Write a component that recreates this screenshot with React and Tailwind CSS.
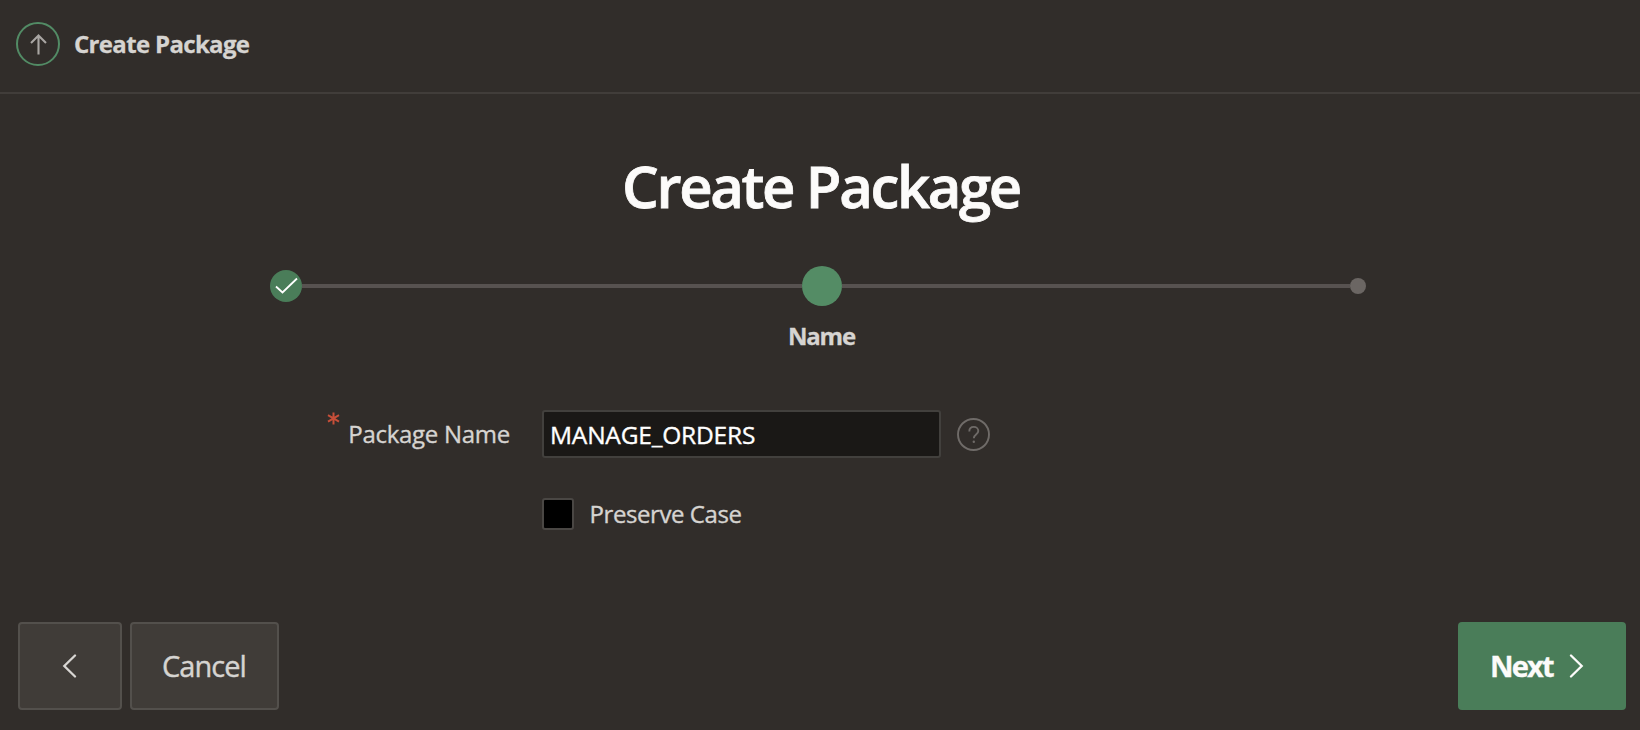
function Step({ children }) {
  return <div className="flex h-10 shrink-0 items-center justify-center">{children}</div>;
}

export default function App() {
  return (
    <div className="flex h-[730px] w-[1640px] flex-col overflow-hidden bg-[#312d2a] font-['Open_Sans','Noto_Sans',sans-serif] text-[#d6d4d1]">
      <header className="flex h-[94px] shrink-0 items-center border-b-2 border-[#413d3a] pb-1 pl-4">
        <button aria-label="Up" className="flex size-11 items-center justify-center rounded-full border-2 border-[#528b65]">
          <svg className="size-10" viewBox="0 0 40 40" fill="none" stroke="#a9a6a3" strokeWidth="2.1">
            <path d="M20.5 30.5V11M13 19l7.5-7.5L28 19" />
          </svg>
        </button>
        <span className="ml-[14px] whitespace-nowrap text-[24px] leading-8 font-bold tracking-[-0.67px] [-webkit-text-stroke:0.3px]">Create Package</span>
      </header>

      <main className="flex flex-1 flex-col">
        <h1 className="mt-[52px] h-20 pl-0.5 text-center text-[58px] leading-[80px] font-semibold tracking-[-2.35px] whitespace-nowrap text-[#fcfbfa] [-webkit-text-stroke:0.8px]">
          Create Package
        </h1>

        <div className="mt-[40px] ml-[270px] flex w-[1096px] items-center">
          <Step>
            <span className="flex size-8 items-center justify-center rounded-full bg-[#4a7d59]">
              <svg className="size-8" viewBox="0 0 32 32" fill="none" stroke="#fff" strokeWidth="1.8">
                <path d="M6 16.5l6.5 6L27 8.5" />
              </svg>
            </span>
          </Step>
          <span className="h-1 w-[500px] bg-[#575250]" />
          <Step>
            <span className="size-10 rounded-full bg-[#548c65]" />
          </Step>
          <span className="h-1 w-[508px] bg-[#575250]" />
          <Step>
            <span className="size-4 rounded-full bg-[#6b6663]" />
          </Step>
        </div>
        <p className="mt-[14px] h-8 pl-[3px] text-center text-[24px] leading-8 font-bold tracking-[-1.2px] [-webkit-text-stroke:0.3px]">Name</p>

        <form className="mt-[58px] flex flex-col gap-10">
          <div className="flex h-12 items-center">
            <label className="flex w-[542px] items-center justify-end gap-[8px] pr-8 text-[24px] tracking-[-0.28px] whitespace-nowrap [-webkit-text-stroke:0.35px]">
              <svg className="mb-8 size-[13px]" viewBox="0 0 13 13" fill="none" stroke="#c74f39" strokeWidth="2">
                <path d="M6.5.5v12M1 3.2l11 6.4M12 3.2L1 9.6" />
              </svg>
              Package Name
            </label>
            <input
              className="h-12 w-[399px] rounded-[3px] border-2 border-[#42403d] bg-[#1a1816] px-[6px] text-[24.5px] tracking-[-0.2px] text-white outline-none [-webkit-text-stroke:0.35px]"
              defaultValue="MANAGE_ORDERS"
            />
            <svg className="ml-4 size-[33px]" viewBox="0 0 33 33" fill="none" stroke="#6f6b68" strokeWidth="1.9">
              <circle cx="16.5" cy="16.5" r="15.5" />
              <path d="M12.3 13.5c0-2.8 1.9-4.6 4.5-4.6s4.5 1.8 4.5 4.2c0 3.5-4.5 3.4-4.5 7.1" />
              <circle cx="16.8" cy="23.7" r="1.2" fill="#6f6b68" stroke="none" />
            </svg>
          </div>
          <label className="ml-[542px] flex h-8 items-center gap-[15.5px] text-[24px] tracking-[-0.42px] whitespace-nowrap [-webkit-text-stroke:0.35px]">
            <input type="checkbox" className="size-8 appearance-none rounded-[3px] border-2 border-[#4a4744] bg-black" />
            Preserve Case
          </label>
        </form>
      </main>

      <footer className="flex h-[108px] shrink-0 items-start gap-2 pr-[14px] pl-[18px]">
        <button aria-label="Previous" className="flex h-[88px] w-[104px] items-center justify-center rounded-[4px] border-2 border-[#53504c] bg-[#403c38]">
          <svg className="h-6 w-4" viewBox="0 0 16 24" fill="none" stroke="#d8d6d3" strokeWidth="2.3" strokeLinecap="round">
            <path d="M13 1.5L2.3 12l10.7 10.5" />
          </svg>
        </button>
        <button className="h-[88px] w-[149px] rounded-[4px] border-2 border-[#53504c] bg-[#403c38] pr-px text-[29px] tracking-[-0.95px] [-webkit-text-stroke:0.4px]">Cancel</button>
        <button className="ml-auto flex h-[88px] w-[168px] items-center rounded-[4px] bg-[#4a7d59] pl-8 text-[29px] font-bold tracking-[-1.8px] text-[#fcfbfa] [-webkit-text-stroke:0.3px]">
          Next
          <svg className="ml-[15px] h-6 w-4" viewBox="0 0 16 24" fill="none" stroke="#fcfbfa" strokeWidth="2.3" strokeLinecap="round">
            <path d="M3 1.5L13.7 12L3 22.5" />
          </svg>
        </button>
      </footer>
    </div>
  );
}
